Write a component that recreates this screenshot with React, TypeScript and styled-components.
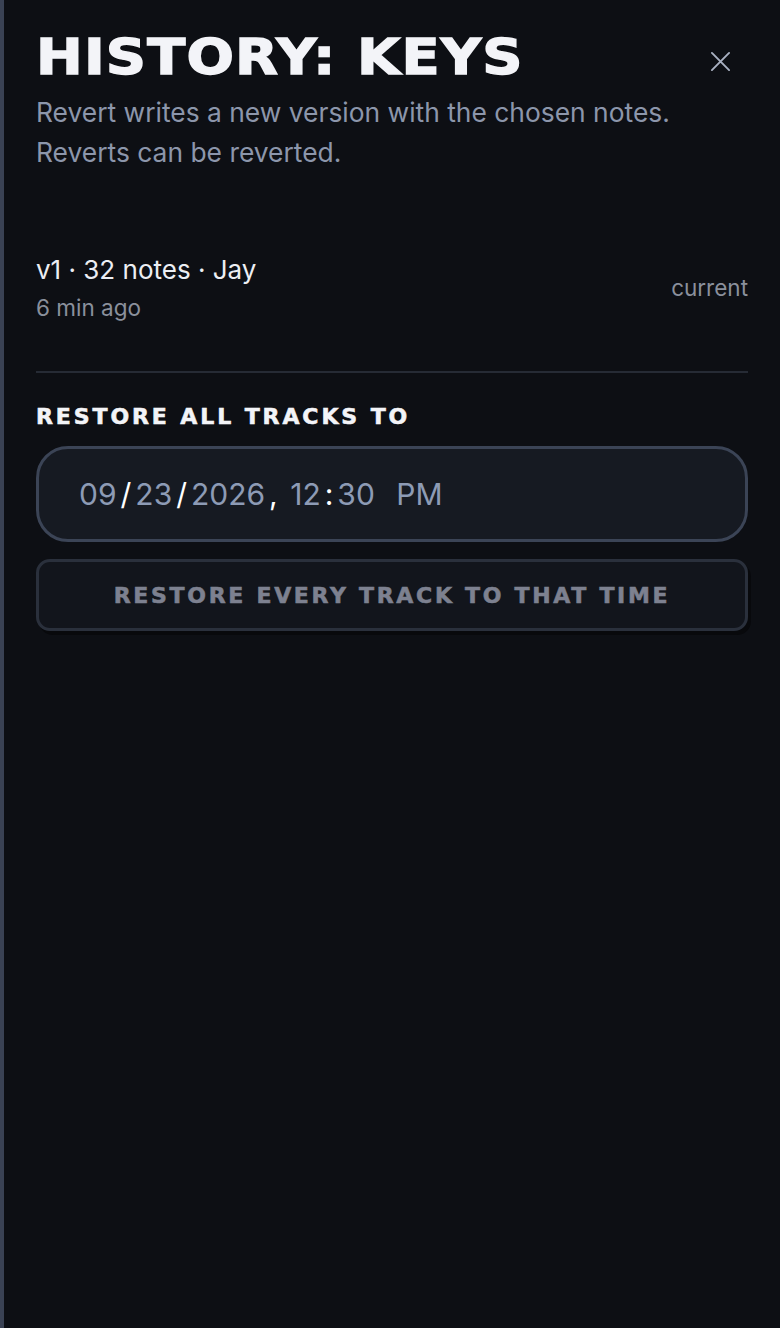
import * as React from "react";
import styled, { createGlobalStyle } from "styled-components";

const GlobalStyle = createGlobalStyle`
    html, body {
        margin: 0;
        padding: 0;
        background: #0d0f14;
    }
    body {
        font-family: Inter, "Noto Sans", sans-serif;
        color: #e8eaf0;
    }
`;

const Panel = styled.aside`
    min-height: 100vh;
    box-sizing: border-box;
    border-left: 4px solid #3a4254;
    background: #0d0f14;
    padding: 30px 32px 40px 32px;
`;

const Header = styled.header`
    display: flex;
    align-items: flex-start;
    justify-content: space-between;
`;

const Title = styled.h1`
    margin: 0;
    font-family: "DejaVu Sans", "Liberation Sans", sans-serif;
    font-weight: 700;
    font-size: 49px;
    line-height: 56px;
    letter-spacing: 1px;
    color: #f3f4f8;
    -webkit-text-stroke: 1.4px #f3f4f8;
    text-transform: uppercase;
    transform: scaleX(1.14);
    transform-origin: left center;
`;

const CloseButton = styled.button`
    background: transparent;
    border: 0;
    padding: 0;
    margin: 19px 16px 0 0;
    width: 24px;
    height: 24px;
    cursor: pointer;
    color: #a9b1c2;
    display: flex;
    align-items: center;
    justify-content: center;
`;

const Subtitle = styled.p`
    margin: 6px 0 0 0;
    font-size: 26.4px;
    line-height: 40px;
    color: #8c96ab;
`;

const VersionRow = styled.div`
    display: flex;
    align-items: center;
    justify-content: space-between;
    margin-top: 80px;
    padding-bottom: 47px;
    border-bottom: 2px solid #262b35;
`;

const VersionInfo = styled.div`
    display: flex;
    flex-direction: column;
    gap: 4px;
`;

const VersionTitle = styled.div`
    font-size: 26px;
    line-height: 36px;
    color: #eceef3;
`;

const Meta = styled.div`
    font-size: 22.5px;
    line-height: 32px;
    color: #8a909c;
`;

const SectionLabel = styled.h2`
    margin: 30px 0 15px 0;
    font-family: "DejaVu Sans", "Liberation Sans", sans-serif;
    font-weight: 700;
    font-size: 22px;
    line-height: 28px;
    letter-spacing: 2.9px;
    color: #f3f4f8;
    -webkit-text-stroke: 0.6px #f3f4f8;
    text-transform: uppercase;
`;

const DateInput = styled.input`
    display: block;
    width: 100%;
    box-sizing: border-box;
    height: 96px;
    padding: 0 36px;
    border: 3px solid #3b4456;
    border-radius: 32px;
    background: #161a22;
    color: #ffffff;
    font-family: Inter, "Noto Sans", sans-serif;
    font-size: 30px;
    outline: 0;
    color-scheme: dark;
    &::-webkit-calendar-picker-indicator {
        display: none;
    }
    &::-webkit-datetime-edit-month-field,
    &::-webkit-datetime-edit-day-field,
    &::-webkit-datetime-edit-year-field,
    &::-webkit-datetime-edit-hour-field,
    &::-webkit-datetime-edit-minute-field {
        color: #8d9bb5;
        padding: 0 4px;
    }
    &::-webkit-datetime-edit-ampm-field {
        color: #8d9bb5;
        padding: 0 4px;
        margin-left: 8px;
    }
`;

const RestoreButton = styled.button`
    display: block;
    width: 100%;
    margin-top: 17px;
    height: 72px;
    border: 3px solid #2a303c;
    border-radius: 14px;
    background: #12151c;
    box-shadow: 3px 4px 0 #08090c;
    color: #7d8190;
    font-family: "DejaVu Sans", "Liberation Sans", sans-serif;
    font-weight: 700;
    font-size: 22px;
    letter-spacing: 2.7px;
    -webkit-text-stroke: 0.6px #7d8190;
    text-transform: uppercase;
    cursor: not-allowed;
`;

const App: React.FC = () => {
    const [when, setWhen] = React.useState("2026-09-23T12:30");
    return (
        <>
            <GlobalStyle />
            <Panel>
                <Header>
                    <Title>History: Keys</Title>
                    <CloseButton aria-label="Close">
                        <svg width="21" height="21" viewBox="0 0 22 22" fill="none" stroke="currentColor" strokeWidth="2" strokeLinecap="round">
                            <path d="M2 2 L20 20 M20 2 L2 20" />
                        </svg>
                    </CloseButton>
                </Header>
                <Subtitle>
                    Revert writes a new version with the chosen notes.
                    <br />
                    Reverts can be reverted.
                </Subtitle>

                <VersionRow>
                    <VersionInfo>
                        <VersionTitle>v1 · 32 notes · Jay</VersionTitle>
                        <Meta>6 min ago</Meta>
                    </VersionInfo>
                    <Meta>current</Meta>
                </VersionRow>

                <SectionLabel>Restore all tracks to</SectionLabel>
                <DateInput
                    type="datetime-local"
                    value={when}
                    onChange={(e) => setWhen(e.target.value)}
                />
                <RestoreButton disabled>Restore every track to that time</RestoreButton>
            </Panel>
        </>
    );
};

export default App;
